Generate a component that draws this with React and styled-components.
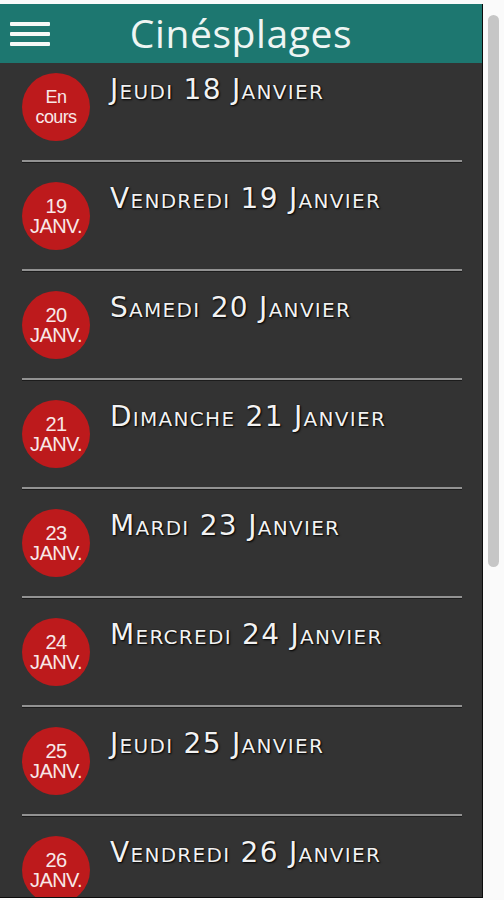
import React from 'react'
import styled, { createGlobalStyle } from 'styled-components'

const GlobalStyle = createGlobalStyle`
  html, body {
    margin: 0;
    padding: 0;
    background: #fafafa;
    overflow: hidden;
  }
`

const Page = styled.div`
  display: flex;
  height: 900px;
  padding-top: 4px;
  box-sizing: border-box;
`

const Frame = styled.div`
  width: 483px;
  height: 894px;
  display: flex;
  flex-direction: column;
  background: #333333;
  border-right: 1px solid #0c0c0c;
  border-bottom: 1px solid #0c0c0c;
  box-sizing: border-box;
  overflow: hidden;
`

const Header = styled.header`
  flex: 0 0 59px;
  display: grid;
  grid-template-columns: 1fr auto 1fr;
  align-items: center;
  background: #1d7770;
  padding: 0 10px;
`

const Burger = styled.button`
  display: flex;
  flex-direction: column;
  gap: 6px;
  width: 40px;
  padding: 0;
  border: none;
  background: none;
  cursor: pointer;

  span {
    display: block;
    height: 4px;
    border-radius: 1px;
    background: #f4f8f7;
  }
`

const Title = styled.h1`
  margin: 0;
  font-family: 'Open Sans', 'Lato', sans-serif;
  font-weight: 400;
  font-size: 39px;
  letter-spacing: 0.6px;
  color: #eef5f3;
  line-height: 1;
  padding: 0 0 3px 0;
`

const List = styled.ul`
  list-style: none;
  margin: 0;
  padding: 0 20px 0 22px;
`

const Item = styled.li`
  display: flex;
  align-items: flex-start;
  gap: 20px;
  padding: ${(p) => (p.$first ? '10px' : '20px')} 0 19px;
  border-bottom: 2px solid #929292;
  box-shadow: 0 1px 0 #1c1c1c;
`

const Badge = styled.div`
  flex: 0 0 68px;
  height: 68px;
  border-radius: 50%;
  background: #bd1a1c;
  display: flex;
  flex-direction: column;
  align-items: center;
  justify-content: center;
  color: #f8e8e8;
  font-family: 'Liberation Sans', Arial, sans-serif;
  font-size: ${(p) => (p.$small ? '18px' : '20px')};
  line-height: 20px;
  letter-spacing: -0.6px;
  text-align: center;
`

const DayTitle = styled.h2`
  margin: 2px 0 0;
  font-family: 'DejaVu Sans', sans-serif;
  font-variant: small-caps;
  font-weight: 400;
  font-size: 28px;
  letter-spacing: 1.3px;
  line-height: 30px;
  color: #f2f2f2;
  text-shadow: 1px 1px 2px #000, 0 0 1px #000;
`

const Scrollbar = styled.div`
  width: 21px;
  height: 900px;
  margin-top: -4px;
  background: #fafafa;
  display: flex;
  justify-content: center;
  padding-top: 15px;
  box-sizing: border-box;
`

const Thumb = styled.div`
  width: 11px;
  height: 552px;
  border-radius: 6px;
  background: #c6c6c6;
`

const days = [
  { title: 'Jeudi 18 Janvier', now: true },
  { title: 'Vendredi 19 Janvier', num: '19' },
  { title: 'Samedi 20 Janvier', num: '20' },
  { title: 'Dimanche 21 Janvier', num: '21' },
  { title: 'Mardi 23 Janvier', num: '23' },
  { title: 'Mercredi 24 Janvier', num: '24' },
  { title: 'Jeudi 25 Janvier', num: '25' },
  { title: 'Vendredi 26 Janvier', num: '26' },
  { title: 'Samedi 27 Janvier', num: '27' },
]

const App = () => {
  return (
    <Page>
      <GlobalStyle />
      <Frame>
        <Header>
          <Burger aria-label="Menu">
            <span />
            <span />
            <span />
          </Burger>
          <Title>Cinésplages</Title>
          <div />
        </Header>
        <List>
          {days.map((d, i) => (
            <Item key={d.title} $first={i === 0}>
              {d.now ? (
                <Badge $small>
                  <span>En</span>
                  <span>cours</span>
                </Badge>
              ) : (
                <Badge>
                  <span>{d.num}</span>
                  <span>JANV.</span>
                </Badge>
              )}
              <DayTitle>{d.title}</DayTitle>
            </Item>
          ))}
        </List>
      </Frame>
      <Scrollbar>
        <Thumb />
      </Scrollbar>
    </Page>
  )
}

export default App
